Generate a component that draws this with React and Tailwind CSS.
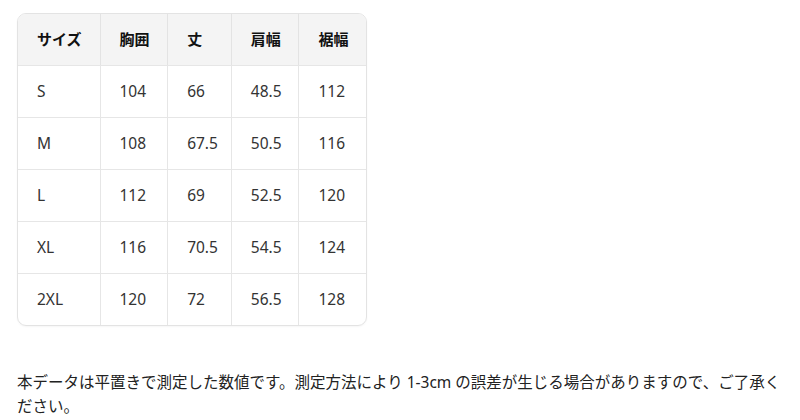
const headers = ["サイズ", "胸囲", "丈", "肩幅", "裾幅"];

const rows = [
  ["S", "104", "66", "48.5", "112"],
  ["M", "108", "67.5", "50.5", "116"],
  ["L", "112", "69", "52.5", "120"],
  ["XL", "116", "70.5", "54.5", "124"],
  ["2XL", "120", "72", "56.5", "128"],
];

const widths = ["w-[83px]", "w-[68px]", "w-[64px]", "w-[68px]", "w-[67px]"];

export default function App() {
  return (
    <div
      className="h-[420px] w-[800px] overflow-hidden bg-white pl-[17px] pt-[13px] text-[#222]"
      style={{ fontFamily: '"Noto Sans", "Noto Sans CJK JP", sans-serif' }}
    >
      <div className="w-[350px] overflow-hidden rounded-[9px] border border-[#e3e3e3] shadow-[0_1px_2px_rgba(0,0,0,0.04)]">
        <div className="flex h-[51px] bg-[#f4f4f4]">
          {headers.map((h, i) => (
            <div
              key={h}
              className={`${widths[i]} flex items-center pl-[19px] text-[15px] font-bold text-[#111] ${
                i < 4 ? "border-r border-[#e3e3e3]" : ""
              }`}
            >
              {h}
            </div>
          ))}
        </div>
        {rows.map((row) => (
          <div key={row[0]} className="flex h-[52px] border-t border-[#e6e6e6]">
            {row.map((cell, i) => (
              <div
                key={i}
                className={`${widths[i]} flex items-center pl-[19px] text-[15.5px] text-[#333] ${
                  i < 4 ? "border-r border-[#e6e6e6]" : ""
                }`}
              >
                {cell}
              </div>
            ))}
          </div>
        ))}
      </div>
      <p className="mt-[44px] w-[776px] text-[15.5px] leading-[24px] text-[#222]">
        本データは平置きで測定した数値です。測定方法により 1-3cm の誤差が生じる場合がありますので、ご了承ください。
      </p>
    </div>
  );
}
